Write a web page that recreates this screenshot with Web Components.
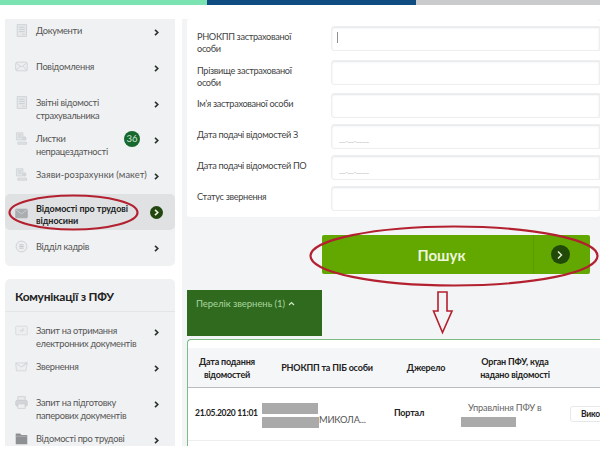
<!DOCTYPE html>
<html lang="uk"><head><meta charset="utf-8"><title>Пошук</title>
<style>
html,body{margin:0;padding:0;background:#fff;width:600px;height:453px;overflow:hidden}
body{font-family:Lato,"Noto Sans",sans-serif;color:#333}
</style></head><body>
<app-shell>
  <top-bar slot="top"></top-bar>
  <side-nav slot="side"></side-nav>
  <main-pane slot="main"></main-pane>
</app-shell>
<script>
const ICONS={
doc:'<rect x="3" y="1" width="13" height="16" fill="#e6e8ea" stroke="#c6cacd"/><path d="M5.500 4.500h8M5.500 7.500h8M5.500 10.500h8M10 14h3.500" stroke="#c2c6c9" fill="none"/>',
mail:'<rect x="1" y="3" width="16" height="12" rx="2" fill="#eceef0" stroke="#c6cacd"/><path d="M2 4.500l7 5 7-5M2 14l5-5.500M16 14l-5-5.500" stroke="#c6cacd" fill="none"/>',
sick:'<path d="M2 1h9v10H2z" fill="#e2e5e7" stroke="#cdd0d3"/><path d="M4 14h12v3H4z" fill="#dfe2e4" stroke="#cdd0d3"/><circle cx="13" cy="9" r="3" fill="#d3d6d9"/><path d="M4 4h5M4 7h5" stroke="#c2c6c9"/>',
mailD:'<rect x="1" y="3" width="16" height="12" rx="1" fill="#a9adb0" stroke="#a0a4a7"/><path d="M1.500 4l7.500 5.500L16.500 4" stroke="#d5d7d9" fill="none"/>',
hr:'<circle cx="9" cy="9" r="7.500" fill="#eceef0" stroke="#c2c6ca"/><path d="M6 6.700h6M6 9h6M6 11.300h6" stroke="#b4b8bc"/>',
req:'<rect x="1" y="3" width="16" height="12" rx="1" fill="#eceef0" stroke="#d3d6d8"/><path d="M11 6v3.500H7" stroke="#c2c6c9" fill="none"/>',
send:'<path d="M1 4h16l-2 11H2z" fill="#eceef0" stroke="#cdd0d3"/><path d="M1.500 4.500l7.500 5.500 7.500-5.500M17 2l-7 7" stroke="#cdd0d3" fill="none"/>',
print:'<rect x="4" y="1" width="10" height="5" fill="#e8eaec" stroke="#c6cacd"/><rect x="1" y="6" width="16" height="8" rx="2" fill="#d3d6d9" stroke="#c6cacd"/><rect x="4" y="11" width="10" height="6" fill="#eceef0" stroke="#c6cacd"/>',
folder:'<path d="M1 2h6l2 2h8v13H1z" fill="#8e9194"/><path d="M1 6h16" stroke="#b5b8ba"/>'
};
function def(name,html){
  customElements.define(name,class extends HTMLElement{
    constructor(){super();this.attachShadow({mode:'open'}).innerHTML=typeof html==='function'?html(this):html;}
  });
}
const chev=(c='#27332a')=>`<svg width="5" height="7" viewBox="0 0 5 7"><path d="M1 .8L3.800 3.500 1 6.200" fill="none" stroke="${c}" stroke-width="1.600"/></svg>`;

def('app-shell',`<style>
:host{display:block;position:relative;width:600px;height:453px;overflow:hidden;background:#fff}
.body{display:flex;margin-top:14px;height:427px;overflow:hidden}
.over{position:absolute;left:0;top:0;pointer-events:none}
</style>
<slot name="top"></slot>
<div class="body"><slot name="side"></slot><slot name="main"></slot></div>
<svg class="over" width="600" height="453" viewBox="0 0 600 453" fill="none" stroke="#b3202f" stroke-width="2.200">
<ellipse cx="73.500" cy="212.500" rx="64" ry="17"/>
<ellipse cx="454" cy="256" rx="143.500" ry="29.500"/>
<path stroke-width="1.600" d="M438 292h9v19h5l-9.500 21.500L433.500 311h4.500z"/>
</svg>`);

def('top-bar',`<style>
:host{display:flex;height:5px}
i{display:block}
.a{width:207px;background:#7be2b1}.b{width:209px;background:#0f4c81}.c{flex:1;background:#c9cbcd}
</style><i class="a"></i><i class="b"></i><i class="c"></i>`);

def('nav-row',h=>{
  const ic=h.getAttribute('icon'),act=h.hasAttribute('active');
  return `<style>
:host{display:flex;box-sizing:border-box;height:36px;padding:12px 0 0 0;font-size:9.300px;letter-spacing:-.3px;line-height:13px;color:#555;position:relative}
:host([first]){height:29px;padding-top:5px}
:host([active]){margin-top:2px;margin-bottom:-2px;padding-top:9px;background:#dfe1e3;border-radius:5px;font-weight:700;line-height:12px;color:#222;font-size:9px;letter-spacing:-.05px}
.ic{flex:none;width:13px;height:13px;margin:0 8px 0 10px}
:host([active]) .ic{margin-top:4px}
.t{flex:1;min-width:0;white-space:nowrap}
.ch{width:21px;flex:none;padding-top:2px}
:host([active]) .ch{padding-top:2px;width:26px}
.dot{width:13px;height:13px;border-radius:50%;background:#21470f;display:flex;align-items:center;justify-content:center;margin:1px 0 0 1px}
::slotted(nav-badge){margin-top:-1px;margin-right:14px}
</style>
<svg class="ic" viewBox="0 0 18 18">${ICONS[ic]}</svg><div class="t"><slot></slot></div><slot name="badge"></slot>
<div class="ch">${act?`<span class="dot">${chev('#e8f2dc')}</span>`:chev()}</div>`;
});
def('nav-badge',`<style>:host{display:flex;flex:none;width:16px;height:16px;border-radius:50%;background:#17682f;color:#cfe6d4;font-size:9.500px;letter-spacing:0;line-height:16px;align-items:center;justify-content:center}</style><slot></slot>`);

def('side-nav',`<style>
:host{display:block;width:170px;margin-left:5px;flex:none}
.card{background:#f0f1f2;border-radius:0 0 5px 5px;height:247px}
.card2{background:#f0f1f2;border-radius:5px 5px 0 0;margin-top:13px;height:167px}
h3{margin:0;box-sizing:border-box;height:33px;padding:9px 0 0 10px;font:700 12px/17px Lato,"Noto Sans",sans-serif;letter-spacing:-.25px;color:#222;border-bottom:1px solid #e3e5e6}
</style>
<div class="card">
<nav-row first icon="doc">Документи</nav-row>
<nav-row icon="mail">Повідомлення</nav-row>
<nav-row icon="doc">Звітні відомості<br>страхувальника</nav-row>
<nav-row icon="sick">Листки<br>непрацездатності<nav-badge slot="badge">36</nav-badge></nav-row>
<nav-row icon="sick" style="letter-spacing:.05px">Заяви-розрахунки (макет)</nav-row>
<nav-row active icon="mailD">Відомості про трудові<br>відносини</nav-row>
<nav-row icon="hr">Відділ кадрів</nav-row>
</div>
<div class="card2">
<h3>Комунікації з ПФУ</h3>
<nav-row icon="req">Запит на отримання<br>електронних документів</nav-row>
<nav-row icon="send">Звернення</nav-row>
<nav-row icon="print">Запит на підготовку<br>паперових документів</nav-row>
<nav-row icon="folder">Відомості про трудові</nav-row>
</div>`);

def('form-row',h=>`<style>
:host{display:flex;height:25px;font-size:9.200px;letter-spacing:-.33px;line-height:12px;color:#444}
label{width:134px;flex:none;box-sizing:border-box;padding-top:4.500px;white-space:nowrap}
.f{flex:1;box-sizing:border-box;background:#fff;border:1px solid #eceeef;border-radius:3px 0 0 3px;box-shadow:inset 0 1px 2px #e4e6e8;display:flex;align-items:flex-end;padding:0 0 5px 7px;color:#b5b8ba;font-size:8px;line-height:8px}
.c{width:1px;height:11px;background:#8d9092;margin:0 0 2px -2px}
</style><label><slot></slot></label><div class="f">${h.hasAttribute('caret')?'<i class="c"></i>':''}${h.getAttribute('ph')||''}</div>`);

def('search-form',`<style>
:host{display:block;background:#fff;height:198px;box-sizing:border-box;padding:7px 0 0 10px;border-radius:3px}
form-row:nth-of-type(2){margin-top:9px}
form-row:nth-of-type(3){margin-top:8px}
form-row:nth-of-type(n+4){margin-top:6px}
</style>
<form-row caret>РНОКПП застрахованої<br>особи</form-row>
<form-row>Прізвище застрахованої<br>особи</form-row>
<form-row>Ім’я застрахованої особи</form-row>
<form-row ph="__.__.____">Дата подачі відомостей З</form-row>
<form-row ph="__.__.____">Дата подачі відомостей ПО</form-row>
<form-row>Статус звернення</form-row>`);

def('search-button',`<style>
:host{display:flex;width:268px;height:39px;margin:18px 0 0 135px;background:#62a800;border-radius:2px;color:#eef6dd;font-weight:700;font-size:15px}
.l{flex:1;display:flex;align-items:center;justify-content:center;padding-left:28px;border-right:1px solid #5a9b00}
.r{width:56px;display:flex;align-items:center;justify-content:center;padding-right:4px;box-sizing:border-box}
.d{width:19px;height:19px;border-radius:50%;background:#214a08;display:flex;align-items:center;justify-content:center}
</style><div class="l"><slot></slot></div><div class="r"><span class="d"><svg width="8" height="10" viewBox="0 0 8 10"><path d="M2 1.500L5.500 5 2 8.500" fill="none" stroke="#e8f2dc" stroke-width="1.400"/></svg></span></div>`);

def('list-tab',`<style>
:host{display:block;width:135px;height:46px;margin-top:16px;box-sizing:border-box;padding:7px 0 0 9px;background:#2f6a1f;color:#a9d69c;font-size:9.500px;letter-spacing:-.05px;line-height:14px}
svg{margin-left:1px;vertical-align:1px}
</style><slot></slot> <svg width="7" height="5" viewBox="0 0 7 5"><path d="M1 4l2.500-2.500L6 4" fill="none" stroke="#cfe8c6" stroke-width="1.200"/></svg>`);

def('result-table',`<style>
:host{display:block;margin-top:3px;height:107px;box-sizing:border-box;border:1px solid #7dbb83;border-width:1px 0 0 1px;border-radius:4px 0 0 0;background:#fff;overflow:hidden;font-size:9px;letter-spacing:-.2px;color:#222}
.g{display:grid;grid-template-columns:78px 122px 76px 102px 80px;width:458px}
.h{margin-top:8px;background:#f5f6f7;border-bottom:1px solid #b9bcbe;box-sizing:border-box;font-weight:700;line-height:13px;text-align:center;align-items:center;color:#222;height:40px;width:412px}
.r{height:52px;border-bottom:1px solid #eceeef;align-items:start;box-sizing:content-box;width:412px}
.d{font-weight:700;margin:19px 0 0 7px;white-space:nowrap;font-size:8.500px;letter-spacing:-.3px;line-height:12px}
.n{position:relative;height:52px;margin-left:-4px}
.b{display:block;background:#aaa;position:absolute}
.m{position:absolute;left:57px;top:26px;line-height:12px;font-size:9.300px;color:#555;white-space:nowrap}
.s{font-weight:700;margin-top:19px;line-height:12px;padding-left:6px}
.o{position:relative;height:52px;color:#666;font-size:9.300px}
.o span{position:absolute;left:4px;top:14px;line-height:12px;white-space:nowrap}
.o .b{left:-3px;top:29px;width:55px;height:10px}
.btn{display:inline-block;margin:18px 0 0 4px;box-sizing:border-box;height:16px;width:70px;border:1px solid #e6e8e9;border-radius:3px;padding-left:10px;font-weight:700;line-height:14px;font-size:8.500px;white-space:nowrap}
</style>
<div class="g h"><div>Дата подання<br>відомостей</div><div>РНОКПП та ПІБ особи</div><div>Джерело</div><div>Орган ПФУ, куда<br>надано відомості</div><div></div></div>
<div class="g r"><div class="d">21.05.2020 11:01</div>
<div class="n"><i class="b" style="left:0;top:15px;width:56px;height:11px"></i><i class="b" style="left:0;top:29px;width:57px;height:11px"></i><span class="m">МИКОЛА...</span></div>
<div class="s">Портал</div>
<div class="o"><span>Управління ПФУ в</span><i class="b"></i></div>
<div><span class="btn">Виконати</span></div></div>`);

def('main-pane',`<style>
:host{display:block;flex:1;margin-left:7px;background:#f3f4f5;padding-left:5px;min-width:0;overflow:hidden;height:427px}
</style>
<search-form></search-form>
<search-button>Пошук</search-button>
<list-tab>Перелік звернень (1)</list-tab>
<result-table></result-table>`);
</script>
</body></html>
